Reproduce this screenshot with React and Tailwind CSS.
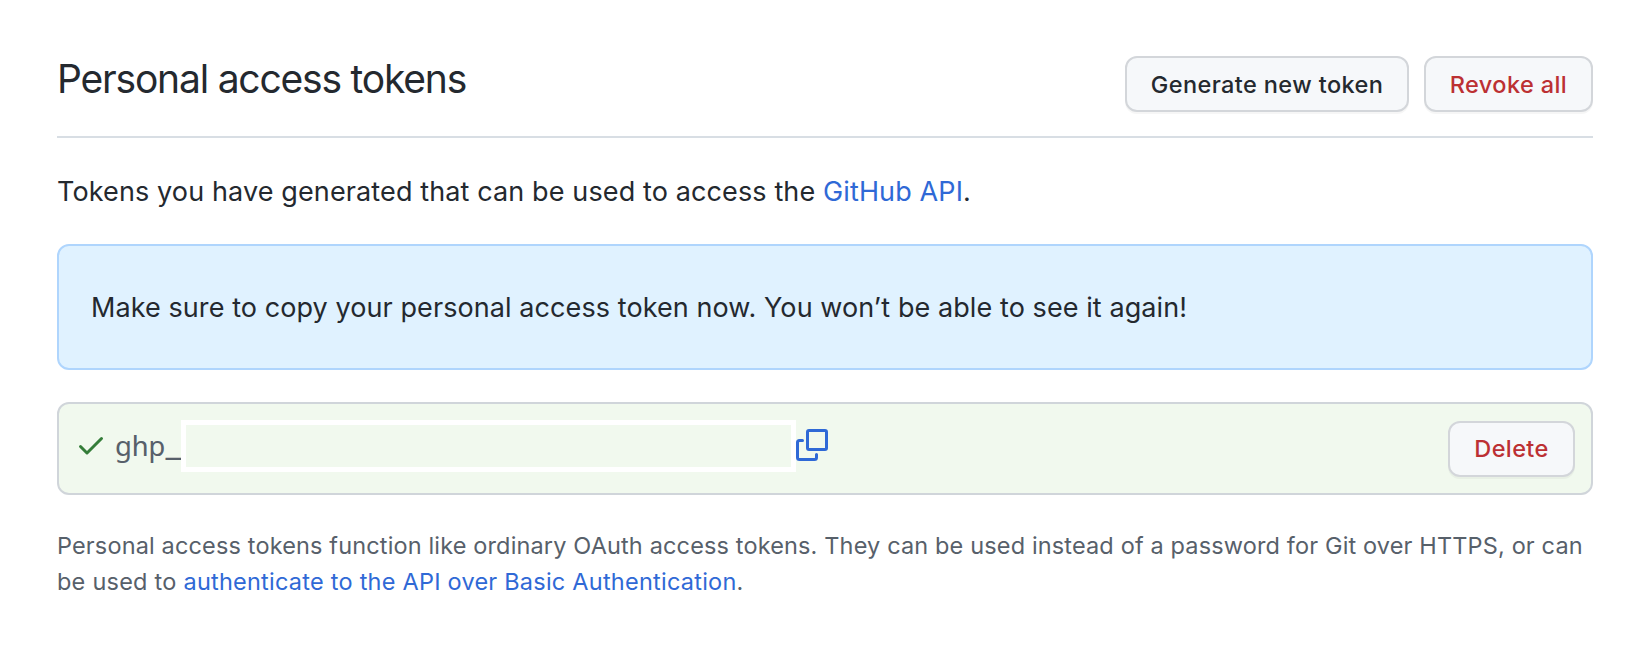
function Button({ children, className = "" }) {
  return (
    <button
      className={`flex h-14 shrink-0 items-center justify-center rounded-xl border-2 border-[#d3d6da] bg-[#f6f8fa] pt-px text-[23.5px] font-medium tracking-[0.4px] shadow-[0_2px_0_rgba(27,31,36,0.04)] ${className}`}
    >
      {children}
    </button>
  );
}

function CheckIcon() {
  return (
    <svg className="-mt-2" width="32" height="32" viewBox="0 0 16 16" fill="#347d39" aria-hidden="true">
      <path d="M13.78 4.22a.75.75 0 010 1.06l-7.25 7.25a.75.75 0 01-1.06 0L2.22 9.28a.75.75 0 011.06-1.06L6 10.94l6.72-6.72a.75.75 0 011.06 0z" />
    </svg>
  );
}

function CopyIcon() {
  return (
    <svg className="-mt-2" width="32" height="32" viewBox="0 0 32 32" fill="none" stroke="#2f69d6" strokeWidth="3" strokeLinecap="round" strokeLinejoin="round" aria-hidden="true">
      <rect x="11.5" y="1.5" width="19" height="19" rx="1.5" />
      <path d="M6.5 11.5h-3a2 2 0 0 0-2 2v15a2 2 0 0 0 2 2h15a2 2 0 0 0 2-2v-3" />
    </svg>
  );
}

export default function App() {
  return (
    <main className="h-[648px] w-[1646px] bg-white pt-14 pr-[53px] pl-[57px] font-['Inter',sans-serif] text-[#24292f]">
      <header className="flex h-[82px] items-start border-b-2 border-[#d8dee4]">
        <h1 className="mt-[-5px] flex-1 text-[39px] leading-[56px] font-normal tracking-[-1.2px]">
          Personal access tokens
        </h1>
        <div className="flex gap-[15px]">
          <Button className="w-[284px]">Generate new token</Button>
          <Button className="w-[169px] text-[#bc3033]">Revoke all</Button>
        </div>
      </header>

      <p className="mt-[33px] text-[27px] leading-[42px] tracking-[0.12px]">
        Tokens you have generated that can be used to access the{" "}
        <a className="text-[#2f69d6]">GitHub API</a>.
      </p>

      <div className="mt-[31px] flex h-[126px] items-center rounded-xl border-2 border-[#afd5fd] bg-[#e0f2ff] px-8 pt-0.5 text-[27px] tracking-[0.08px]">
        Make sure to copy your personal access token now. You won’t be able to see it again!
      </div>

      <div className="mt-8 flex h-[93px] items-center rounded-xl border-2 border-[#d0d5da] bg-[#f1f9ee] px-4">
        <CheckIcon />
        <code className="-mt-2 ml-2 w-[67px] font-['Noto_Sans_Mono','DejaVu_Sans_Mono',monospace] text-[28px] leading-9 text-[#57606a]">
          ghp_
        </code>
        <div className="-mt-[5px] -ml-px h-[52px] w-[615px] border-[5px] border-white" />
        <CopyIcon />
        <Button className="ml-auto w-[127px] text-[#bc3033]">Delete</Button>
      </div>

      <p className="mt-[33px] text-[23.5px] leading-9 whitespace-nowrap text-[#57606a]">
        <span className="tracking-[0.145px]">
          Personal access tokens function like ordinary OAuth access tokens. They can be used instead of a password for Git over HTTPS, or can
        </span>
        <br />
        <span className="tracking-[0.235px]">
          be used to <a className="text-[#2f69d6]">authenticate to the API over Basic Authentication</a>.
        </span>
      </p>
    </main>
  );
}
